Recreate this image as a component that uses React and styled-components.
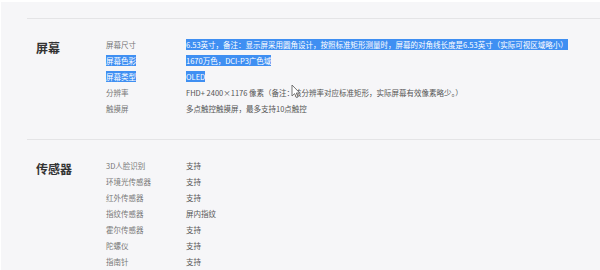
import React from 'react';
import styled, { createGlobalStyle } from 'styled-components';

const GlobalStyle = createGlobalStyle`
  html, body {
    margin: 0;
    padding: 0;
    background: #ffffff;
  }
  body {
    font-family: "Noto Sans CJK SC", "Noto Sans", sans-serif;
  }
`;

const Page = styled.div`
  position: relative;
  margin: 2px 0 0 1px;
  height: 268px;
  background: #f6f6f8;
  overflow: hidden;
  padding-top: 16px;
  box-sizing: border-box;
`;

const Section = styled.section`
  margin-left: 26px;
  border-top: 1px solid #e4e4e6;
  padding: 18px 0 ${p => p.$bottom || 21}px 9px;
  display: grid;
  grid-template-columns: 70px 1fr;
`;

const Title = styled.h2`
  margin: 0;
  font-size: 12px;
  line-height: 21px;
  font-weight: 700;
  color: #333333;
`;

const Rows = styled.div`
  display: flex;
  flex-direction: column;
`;

const Row = styled.div`
  display: grid;
  grid-template-columns: 80px 1fr;
  height: 16px;
  line-height: 16px;
  font-size: 7.5px;
  white-space: nowrap;
`;

const Label = styled.span`
  color: #777777;
`;

const Value = styled.span`
  color: #555555;
`;

const Text = styled.span`
  ${p => p.$selected && `
    background: #3f8ff2;
    color: #ffffff;
  `}
`;

const Cursor = styled.svg`
  position: absolute;
  left: 290px;
  top: 82px;
`;

const screen = [
  { label: '屏幕尺寸', value: '6.53英寸，备注：显示屏采用圆角设计，按照标准矩形测量时，屏幕的对角线长度是6.53英寸（实际可视区域略小）', selLabel: false, selValue: true },
  { label: '屏幕色彩', value: '1670万色，DCI-P3广色域', selLabel: true, selValue: true },
  { label: '屏幕类型', value: 'OLED', selLabel: true, selValue: true },
  { label: '分辨率', value: 'FHD+ 2400×1176 像素（备注：该分辨率对应标准矩形，实际屏幕有效像素略少。）' },
  { label: '触摸屏', value: '多点触控触摸屏，最多支持10点触控' },
];

const sensors = [
  { label: '3D人脸识别', value: '支持' },
  { label: '环境光传感器', value: '支持' },
  { label: '红外传感器', value: '支持' },
  { label: '指纹传感器', value: '屏内指纹' },
  { label: '霍尔传感器', value: '支持' },
  { label: '陀螺仪', value: '支持' },
  { label: '指南针', value: '支持' },
];

const SpecSection = ({ title, items, bottom }) => (
  <Section $bottom={bottom}>
    <Title>{title}</Title>
    <Rows>
      {items.map(item => (
        <Row key={item.label}>
          <Label><Text $selected={item.selLabel}>{item.label}</Text></Label>
          <Value><Text $selected={item.selValue}>{item.value}</Text></Value>
        </Row>
      ))}
    </Rows>
  </Section>
);

export default function App() {
  return (
    <>
      <GlobalStyle />
      <Page>
        <SpecSection title="屏幕" items={screen} bottom={22} />
        <SpecSection title="传感器" items={sensors} />
        <Cursor width="10" height="15" viewBox="0 0 10 15">
          <path d="M1 1 L1 12 L3.6 9.6 L5.4 13.6 L7 12.9 L5.3 9 L8.8 9 Z" fill="#ffffff" stroke="#666666" strokeWidth="0.9" strokeLinejoin="round" />
        </Cursor>
      </Page>
    </>
  );
}
